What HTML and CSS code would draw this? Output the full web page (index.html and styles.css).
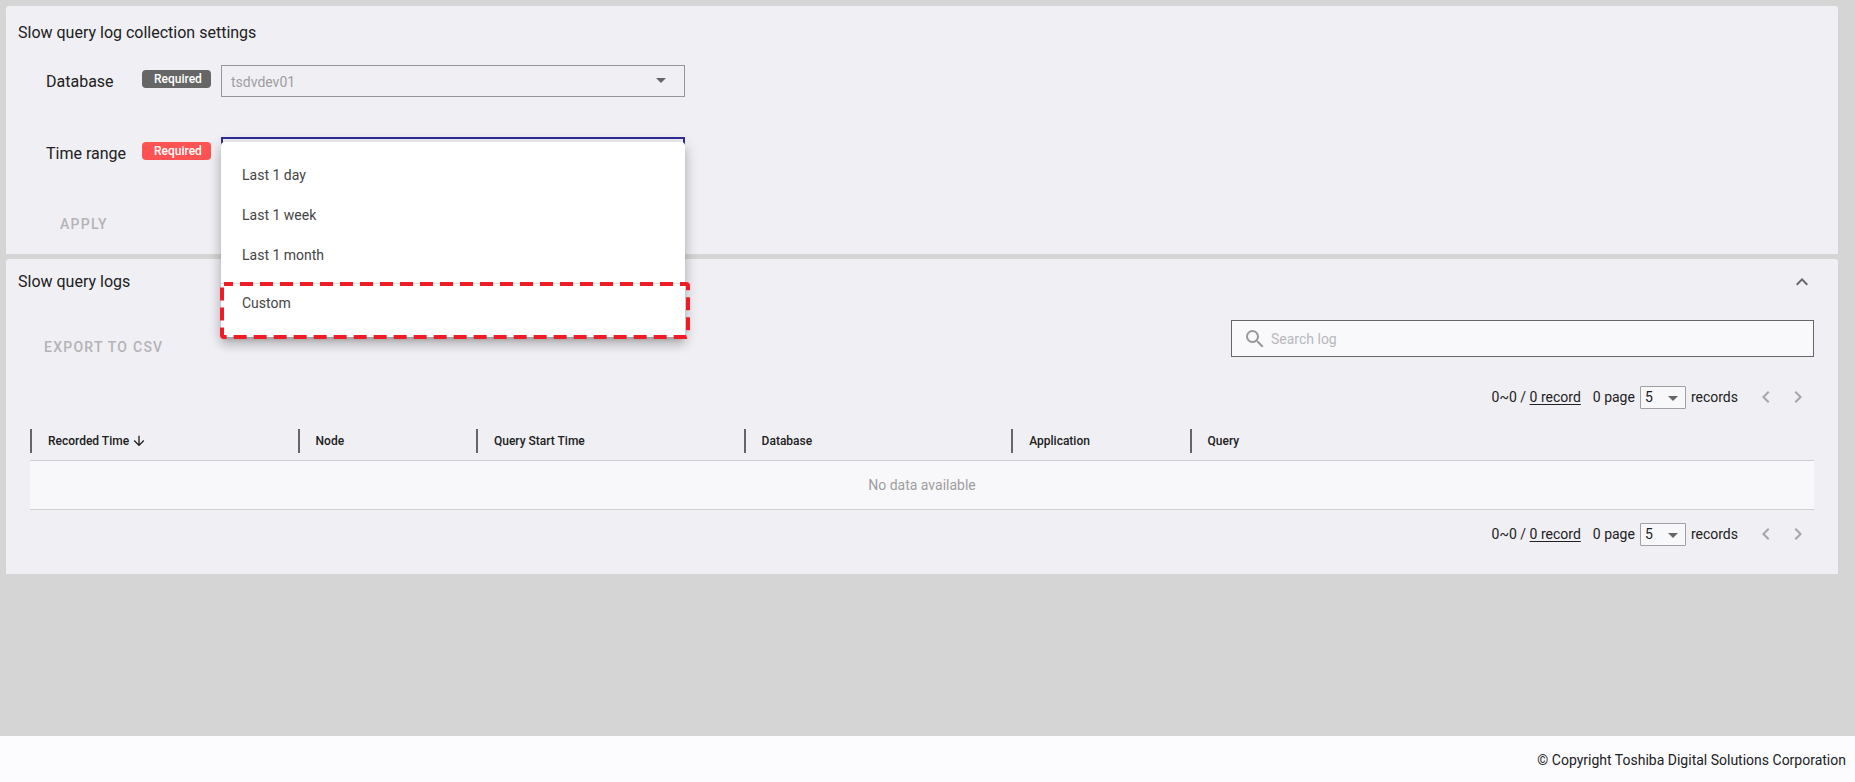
FILE: index.html
```
<!DOCTYPE html>
<html lang="en">
<head>
  <meta charset="utf-8">
  <meta name="viewport" content="width=device-width, initial-scale=1">
  <title>Slow query logs</title>
  <link rel="stylesheet" href="styles.css">
</head>
<body>
  <main>
    <section class="panel settings">
      <h2>Slow query log collection settings</h2>

      <form id="settings-form">
        <div class="field">
          <label for="database">Database</label>
          <span class="badge">Required</span>
          <div class="select">
            <select id="database" disabled>
              <option>tsdvdev01</option>
            </select>
            <svg class="caret" viewBox="0 0 10 5"><path d="M0 0h10L5 5z"/></svg>
          </div>
        </div>

        <div class="field">
          <label for="range">Time range</label>
          <span class="badge error">Required</span>
          <div class="select open">
            <select id="range">
              <option></option>
            </select>
            <div class="menu">
              <button type="button">Last 1 day</button>
              <button type="button">Last 1 week</button>
              <button type="button">Last 1 month</button>
              <hr>
              <button type="button">Custom</button>
              <svg class="marker"><rect x="2" y="2" rx="2"/></svg>
            </div>
          </div>
        </div>

        <button class="text-button" type="submit" disabled>APPLY</button>
      </form>
    </section>

    <section class="panel logs">
      <header>
        <h2>Slow query logs</h2>
        <button class="icon-button" type="button" aria-label="Collapse">
          <svg width="24" height="24" viewBox="0 0 24 24"><path d="M7.41 15.41L12 10.83l4.59 4.58L18 14l-6-6-6 6z"/></svg>
        </button>
      </header>

      <div class="toolbar">
        <button class="text-button" type="button" disabled>EXPORT TO CSV</button>
        <label class="search">
          <svg width="24" height="24" viewBox="0 0 24 24"><path d="M9.5 3A6.5 6.5 0 0 1 16 9.5c0 1.61-.59 3.09-1.56 4.23l.27.27h.79l5 5-1.5 1.5-5-5v-.79l-.27-.27A6.516 6.516 0 0 1 9.5 16 6.5 6.5 0 0 1 3 9.5 6.5 6.5 0 0 1 9.5 3m0 2C7 5 5 7 5 9.5S7 14 9.5 14 14 12 14 9.5 12 5 9.5 5z"/></svg>
          <input type="text" placeholder="Search log" aria-label="Search log">
        </label>
      </div>

      <div class="pagination">
        <span>0~0 / <a href="#">0 record</a></span>
        <label for="page-top">0 page</label>
        <div class="page-size">
          <select id="page-top"><option>5</option></select>
          <svg class="caret" viewBox="0 0 10 5"><path d="M0 0h10L5 5z"/></svg>
        </div>
        <span>records</span>
        <button class="icon-button prev" type="button" aria-label="Previous page" disabled>
          <svg width="24" height="24" viewBox="0 0 24 24"><path d="M15.41 16.58L10.83 12l4.58-4.59L14 6l-6 6 6 6z"/></svg>
        </button>
        <button class="icon-button next" type="button" aria-label="Next page" disabled>
          <svg width="24" height="24" viewBox="0 0 24 24"><path d="M8.59 16.58L13.17 12 8.59 7.41 10 6l6 6-6 6z"/></svg>
        </button>
      </div>

      <table>
        <thead>
          <tr>
            <th class="wide"><div>Recorded Time <svg width="16" height="16" viewBox="0 0 24 24"><path d="M11 4h2v12l5.5-5.5 1.42 1.42L12 19.84l-7.92-7.92L5.5 10.5 11 16z"/></svg></div></th>
            <th class="narrow"><div>Node</div></th>
            <th class="wide"><div>Query Start Time</div></th>
            <th class="wide"><div>Database</div></th>
            <th class="narrow"><div>Application</div></th>
            <th><div>Query</div></th>
          </tr>
        </thead>
        <tbody>
          <tr><td colspan="6">No data available</td></tr>
        </tbody>
      </table>

      <div class="pagination">
        <span>0~0 / <a href="#">0 record</a></span>
        <label for="page-bottom">0 page</label>
        <div class="page-size">
          <select id="page-bottom"><option>5</option></select>
          <svg class="caret" viewBox="0 0 10 5"><path d="M0 0h10L5 5z"/></svg>
        </div>
        <span>records</span>
        <button class="icon-button prev" type="button" aria-label="Previous page" disabled>
          <svg width="24" height="24" viewBox="0 0 24 24"><path d="M15.41 16.58L10.83 12l4.58-4.59L14 6l-6 6 6 6z"/></svg>
        </button>
        <button class="icon-button next" type="button" aria-label="Next page" disabled>
          <svg width="24" height="24" viewBox="0 0 24 24"><path d="M8.59 16.58L13.17 12 8.59 7.41 10 6l6 6-6 6z"/></svg>
        </button>
      </div>
    </section>
  </main>

  <footer>© Copyright Toshiba Digital Solutions Corporation</footer>
</body>
</html>
```

FILE: styles.css
```
* {
  box-sizing: border-box;
  margin: 0;
  padding: 0;
}

body {
  min-height: 100vh;
  display: flex;
  flex-direction: column;
  background-color: #d5d5d5;
  color: #212121;
  font-family: Roboto, sans-serif;
  font-size: 14px;
  line-height: 20px;
}

button,
input,
select {
  background: none;
  border: none;
  color: inherit;
  font: inherit;
}
select {
  appearance: none;
  opacity: 1;
}
svg {
  display: block;
  fill: #666;
}

main {
  flex: 1;
  display: flex;
  flex-direction: column;
  gap: 5px;
  padding: 6px 17px 6px 6px;
}

.panel {
  background-color: #f0eff4;
  border-radius: 3px 3px 0 0;
}
.panel h2 {
  font-size: 16px;
  font-weight: 400;
  line-height: 24px;
}

.settings {
  padding: 15px 12px 12px;
}
.field {
  display: flex;
  align-items: flex-start;
  height: 32px;
  margin: 20px 0 40px 28px;
}
.field + .field {
  margin-top: 0;
  margin-bottom: 37px;
}
.field > label {
  width: 96px;
  font-size: 16px;
  line-height: 34px;
}
.badge {
  width: 69px;
  margin: 5px 10px 0 0;
  padding-left: 12px;
  border-radius: 4px;
  background-color: #666;
  color: #fff;
  font-size: 12px;
  font-weight: 500;
  line-height: 18px;
}
.badge.error {
  background-color: #ff5252;
}

.select {
  position: relative;
  width: 464px;
}
.select > select {
  display: block;
  width: 100%;
  height: 32px;
  padding: 2px 0 0 9px;
  border: 1px solid #96959a;
  color: #9e9e9e;
}
.select.open > select {
  border: 2px solid #302c98;
}
.caret {
  position: absolute;
  width: 10px;
  height: 5px;
  pointer-events: none;
}
.select > .caret {
  top: 13px;
  right: 19px;
}

.menu {
  position: absolute;
  top: 5px;
  left: 0;
  z-index: 1;
  width: 100%;
  padding: 13px 0 14px;
  background-color: #fff;
  border-radius: 4px;
  box-shadow: 0 5px 5px -3px rgba(0,0,0,.2), 0 8px 10px 1px rgba(0,0,0,.14), 0 3px 14px 2px rgba(0,0,0,.12);
}
.menu button {
  display: block;
  width: 100%;
  height: 40px;
  padding-left: 21px;
  color: #444;
  text-align: left;
}
.menu hr {
  margin: 8px 0 -1px;
  border: none;
  border-top: 1px solid #ddd;
}
.marker {
  position: absolute;
  bottom: -2px;
  left: -1px;
  width: calc(100% + 6px);
  height: 57px;
  pointer-events: none;
}
.marker rect {
  width: calc(100% - 4px);
  height: 53px;
  fill: none;
  stroke: #ee1c25;
  stroke-width: 4px;
  stroke-dasharray: 13px 7px;
  stroke-dashoffset: 4px;
}

.text-button {
  height: 36px;
  padding: 0 16px;
  color: #b4b3b7;
  font-weight: 500;
  letter-spacing: 1.25px;
}
.settings .text-button {
  margin-left: 26px;
}

.logs {
  padding: 11px 24px 28px;
}
.logs header {
  display: flex;
  justify-content: space-between;
  margin-left: -12px;
}
.icon-button {
  width: 24px;
  height: 24px;
}
.icon-button:disabled svg {
  fill: #a5a5a8;
}

.toolbar {
  display: flex;
  justify-content: space-between;
  align-items: flex-start;
  margin-top: 26px;
}
.toolbar .text-button {
  margin: 9px 0 0 -2px;
}
.search {
  display: flex;
  align-items: center;
  width: 583px;
  height: 37px;
  padding-left: 11px;
  background-color: #f9f9fc;
  border: 1px solid #666;
}
.search svg {
  fill: #999;
}
.search input {
  flex: 1;
  height: 35px;
  padding-left: 4px;
  outline: none;
}
.search input::placeholder {
  color: #b8b8ba;
}

.pagination {
  display: flex;
  justify-content: flex-end;
  align-items: center;
  height: 24px;
}
.toolbar + .pagination {
  margin-top: 20px;
}
.pagination a {
  color: inherit;
  text-underline-offset: 2px;
}
.pagination label {
  margin: 0 5px 0 12px;
}
.page-size {
  position: relative;
  margin-right: 5px;
}
.page-size select {
  display: block;
  width: 46px;
  height: 23px;
  padding-left: 4px;
  background-color: #f8f8fb;
  border: 1px solid #a0a0a3;
  border-radius: 1px;
}
.page-size .caret {
  top: 10px;
  right: 8px;
}
.pagination .prev {
  margin-left: 16px;
}
.pagination .next {
  margin: 0 4px 0 8px;
}

table {
  width: 100%;
  margin: 20px 0 12px;
  border-collapse: collapse;
  table-layout: fixed;
}
th {
  padding-bottom: 7px;
  font-size: 12px;
  font-weight: 500;
  text-align: left;
}
th div {
  display: flex;
  align-items: center;
  gap: 2px;
  height: 24px;
  padding-left: 16px;
  border-left: 2px solid #666;
}
th svg {
  fill: #212121;
}
th.wide {
  width: 15%;
}
th.narrow {
  width: 10%;
}
td {
  height: 49px;
  background-color: #f8f8fa;
  border-top: 1px solid #d0d0d2;
  border-bottom: 1px solid #d0d0d2;
  color: #9e9e9e;
  text-align: center;
}

footer {
  padding: 14px 9px 12px;
  background-color: #fcfcff;
  text-align: right;
}
```
